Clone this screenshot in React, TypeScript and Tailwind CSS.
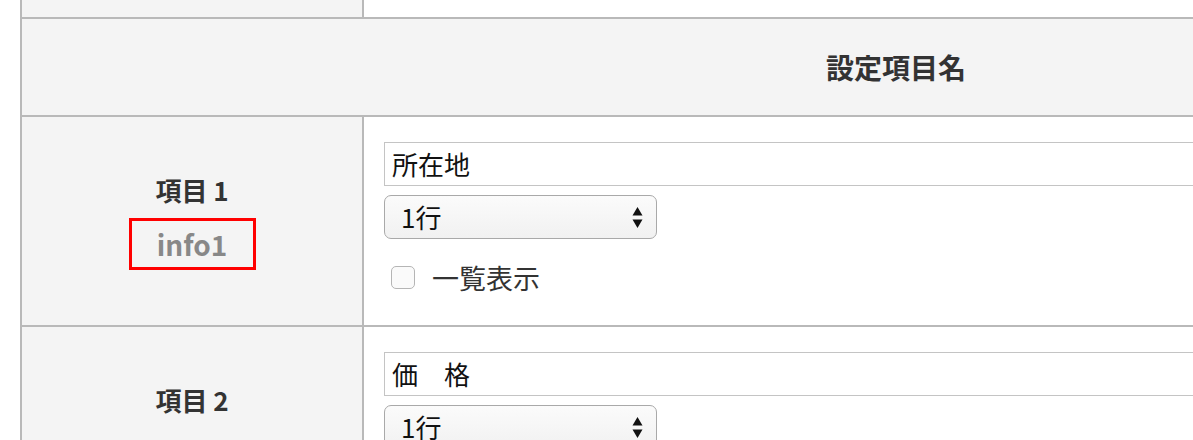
import React from "react";

const font = { fontFamily: '"Noto Sans CJK JP", "Noto Sans", sans-serif' };

function SelectBox() {
  return (
    <div className="flex h-[44px] w-[273px] items-center justify-between rounded-[7px] border border-[#a9a9a9] bg-gradient-to-b from-[#fbfbfb] to-[#f1f1f1] pl-[16px] pr-[13px]">
      <span className="text-[26px] leading-none text-[#111]">1行</span>
      <svg width="11" height="22" viewBox="0 0 11 22" className="mt-[1px]">
        <polygon points="5.5,0 10.5,8.5 0.5,8.5" fill="#111" />
        <polygon points="0.5,12.5 10.5,12.5 5.5,21" fill="#111" />
      </svg>
    </div>
  );
}

function Row({
  n,
  value,
  showInfo,
}: {
  n: number;
  value: string;
  showInfo: boolean;
}) {
  return (
    <div className="flex h-[210px] border-b-2 border-[#b9b9b9]">
      <div className="flex w-[342px] shrink-0 flex-col items-center border-r-2 border-[#b9b9b9] bg-[#f4f4f4] pt-[55px]">
        <div className="text-[26px] font-bold leading-[36px] text-[#333]">
          項目 {n}
        </div>
        {showInfo && (
          <div className="mt-[10px] flex h-[52px] w-[127px] items-center justify-center border-[3px] border-[#ff0000]">
            <span className="text-[28px] font-bold leading-none text-[#888]">
              info{n}
            </span>
          </div>
        )}
      </div>
      <div className="flex flex-1 flex-col bg-white pl-[20px] pt-[25px]">
        <div className="flex h-[44px] w-[1360px] items-center border border-[#c4c4c4] bg-white pl-[7px]">
          <span className="text-[26px] leading-none text-[#111]">{value}</span>
        </div>
        <div className="mt-[9px]">
          <SelectBox />
        </div>
        <div className="mt-[25px] flex items-center pl-[7px]">
          <div className="h-[23px] w-[24px] rounded-[5px] border border-[#b5b5b5] bg-[#fafafa]" />
          <span className="ml-[17px] text-[27px] leading-none text-[#333]">
            一覧表示
          </span>
        </div>
      </div>
    </div>
  );
}

export default function App() {
  return (
    <div
      className="h-[440px] w-[1193px] overflow-hidden bg-white pl-[20px]"
      style={font}
    >
      <div className="w-[1750px] border-l-2 border-[#b9b9b9]">
        <div className="flex h-[19px] border-b-2 border-[#b9b9b9]">
          <div className="w-[342px] shrink-0 border-r-2 border-[#b9b9b9] bg-[#f4f4f4]" />
          <div className="flex-1 bg-white" />
        </div>
        <div className="flex h-[98px] items-center justify-center border-b-2 border-[#b9b9b9] bg-[#f4f4f4]">
          <span className="text-[28px] font-bold leading-none text-[#333]">
            設定項目名
          </span>
        </div>
        <Row n={1} value="所在地" showInfo={true} />
        <Row n={2} value="価　格" showInfo={false} />
      </div>
    </div>
  );
}
